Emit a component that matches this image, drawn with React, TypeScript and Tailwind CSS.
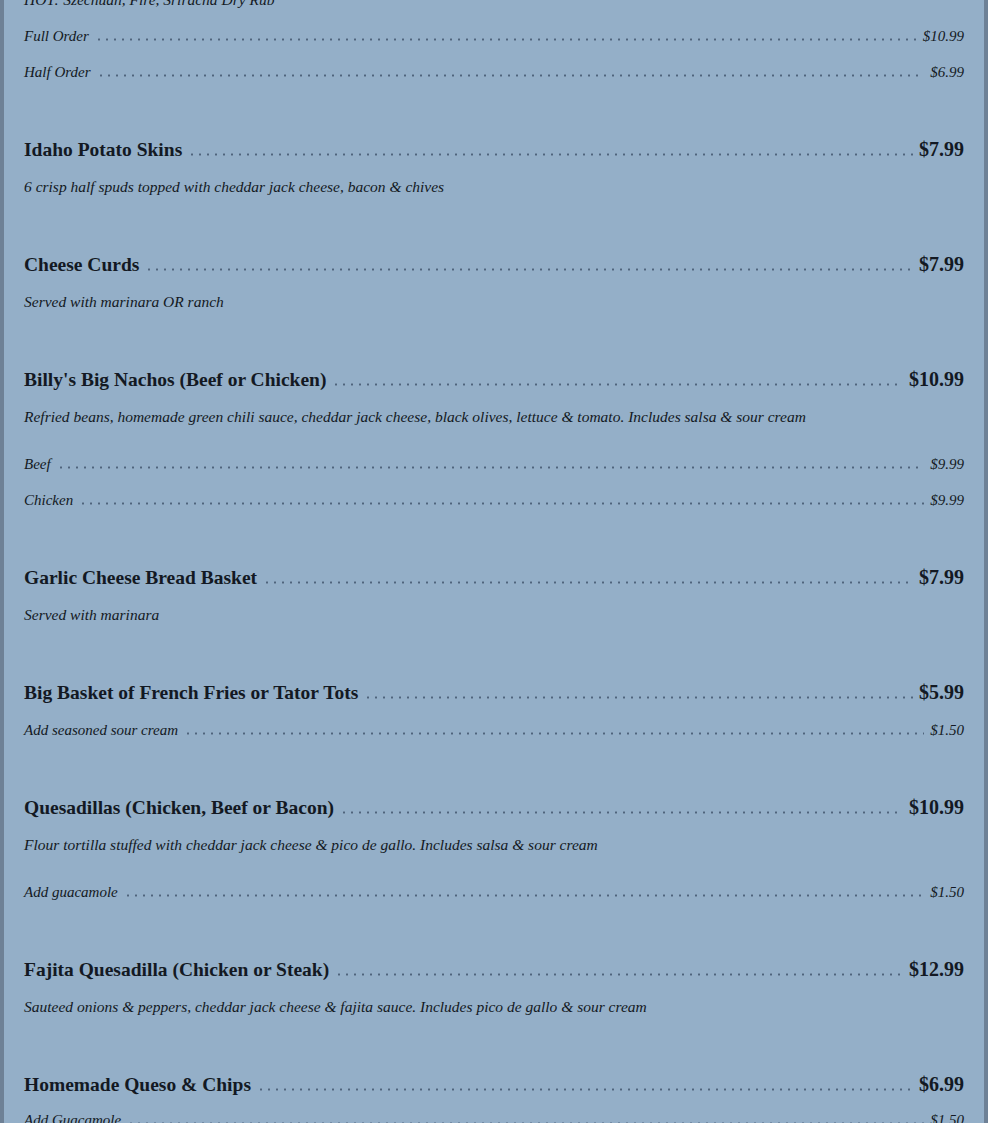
import React from "react";

type Row =
  | { k: "title"; text: string; price: string; mt?: number }
  | { k: "desc"; text: string; mt?: number }
  | { k: "sub"; text: string; price: string; mt?: number };

const rows: Row[] = [
  { k: "desc", text: "HOT: Szechuan, Fire, Sriracha Dry Rub" },
  { k: "sub", text: "Full Order", price: "$10.99" },
  { k: "sub", text: "Half Order", price: "$6.99" },
  { k: "title", text: "Idaho Potato Skins", price: "$7.99", mt: 41 },
  { k: "desc", text: "6 crisp half spuds topped with cheddar jack cheese, bacon & chives", mt: 2 },
  { k: "title", text: "Cheese Curds", price: "$7.99", mt: 41 },
  { k: "desc", text: "Served with marinara OR ranch", mt: 2 },
  { k: "title", text: "Billy's Big Nachos (Beef or Chicken)", price: "$10.99", mt: 41 },
  {
    k: "desc",
    text: "Refried beans, homemade green chili sauce, cheddar jack cheese, black olives, lettuce & tomato. Includes salsa & sour cream",
    mt: 2,
  },
  { k: "sub", text: "Beef", price: "$9.99", mt: 11 },
  { k: "sub", text: "Chicken", price: "$9.99" },
  { k: "title", text: "Garlic Cheese Bread Basket", price: "$7.99", mt: 41 },
  { k: "desc", text: "Served with marinara", mt: 2 },
  { k: "title", text: "Big Basket of French Fries or Tator Tots", price: "$5.99", mt: 41 },
  { k: "sub", text: "Add seasoned sour cream", price: "$1.50", mt: 2 },
  { k: "title", text: "Quesadillas (Chicken, Beef or Bacon)", price: "$10.99", mt: 41 },
  {
    k: "desc",
    text: "Flour tortilla stuffed with cheddar jack cheese & pico de gallo. Includes salsa & sour cream",
    mt: 2,
  },
  { k: "sub", text: "Add guacamole", price: "$1.50", mt: 11 },
  { k: "title", text: "Fajita Quesadilla (Chicken or Steak)", price: "$12.99", mt: 41 },
  {
    k: "desc",
    text: "Sauteed onions & peppers, cheddar jack cheese & fajita sauce. Includes pico de gallo & sour cream",
    mt: 2,
  },
  { k: "title", text: "Homemade Queso & Chips", price: "$6.99", mt: 41 },
  { k: "sub", text: "Add Guacamole", price: "$1.50", mt: 0 },
];

function Leader() {
  return (
    <span className="mx-[6px] h-[3px] flex-1 bg-[radial-gradient(circle,#4f647c_0.9px,transparent_1.3px)] bg-[length:8px_3px] bg-repeat-x" />
  );
}

export default function App() {
  return (
    <div className="h-[1123px] w-full overflow-hidden bg-[#6e8196] px-[4px] font-['Liberation_Serif',serif] text-[#131923]">
      <div className="h-full overflow-hidden bg-[#94afc8] px-[20px]">
        <div className="-mt-[18px]">
          {rows.map((r, i) => {
            const style = r.mt ? { marginTop: r.mt } : undefined;
            if (r.k === "title") {
              return (
                <div key={i} style={style} className="flex h-[36px] items-baseline pt-[6px]">
                  <span className="text-[19.5px] font-bold leading-[24px]">{r.text}</span>
                  <Leader />
                  <span className="text-[20px] font-bold leading-[24px]">{r.price}</span>
                </div>
              );
            }
            if (r.k === "desc") {
              return (
                <div key={i} style={style} className="flex h-[36px] items-center text-[15.5px] italic">
                  {r.text}
                </div>
              );
            }
            return (
              <div key={i} style={style} className="flex h-[36px] items-baseline pt-[8px] text-[15px] italic leading-[20px]">
                <span>{r.text}</span>
                <Leader />
                <span>{r.price}</span>
              </div>
            );
          })}
        </div>
      </div>
    </div>
  );
}
